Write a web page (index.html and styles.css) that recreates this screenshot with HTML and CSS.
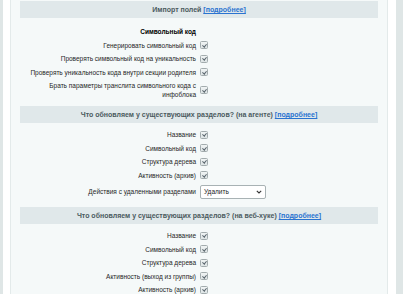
FILE: index.html
```html
<!DOCTYPE html>
<html lang="ru">
<head>
  <meta charset="UTF-8"/>
  <title>Импорт полей</title>
  <link rel="stylesheet" href="styles.css">
</head>
<body>
<div class="strip"></div>
<div class="gap-left"></div>

<main class="panel">
  <!-- Импорт полей -->
  <div class="heading">Импорт полей <a href="#">[подробнее]</a></div>
  <div class="row subheading"><label>Символьный код</label></div>
  <div class="row"><label>Генерировать символьный код</label><span class="cb"></span></div>
  <div class="row"><label>Проверять символьный код на уникальность</label><span class="cb"></span></div>
  <div class="row"><label>Проверять уникальность кода внутри секции родителя</label><span class="cb"></span></div>
  <div class="row tall"><label>Брать параметры транслита символьного кода с инфоблока</label><span class="cb"></span></div>

  <!-- На агенте -->
  <div class="heading">Что обновляем у существующих разделов? (на агенте) <a href="#">[подробнее]</a></div>
  <div class="row"><label>Название</label><span class="cb"></span></div>
  <div class="row"><label>Символьный код</label><span class="cb"></span></div>
  <div class="row"><label>Структура дерева</label><span class="cb"></span></div>
  <div class="row"><label>Активность (архив)</label><span class="cb"></span></div>
  <div class="row select-row">
    <label>Действия с удаленными разделами</label>
    <div class="select">
      <span>Удалить</span>
      <svg width="6" height="4" viewBox="0 0 6 4"><path d="M0.8 0.8 L3 3 L5.2 0.8" fill="none" stroke="#333" stroke-width="1.1"/></svg>
    </div>
  </div>

  <!-- На веб-хуке -->
  <div class="heading">Что обновляем у существующих разделов? (на веб-хуке) <a href="#">[подробнее]</a></div>
  <div class="row"><label>Название</label><span class="cb"></span></div>
  <div class="row"><label>Символьный код</label><span class="cb"></span></div>
  <div class="row"><label>Структура дерева</label><span class="cb"></span></div>
  <div class="row"><label>Активность (выход из группы)</label><span class="cb"></span></div>
  <div class="row"><label>Активность (архив)</label><span class="cb"></span></div>
</main>

<div class="gap-right"></div>
<div class="strip right"></div>
</body>
</html>
```

FILE: styles.css
```css
body {
  margin: 0;
  height: 294px;
  overflow: hidden;
  display: flex;
  background: #fff;
  font-family: "Liberation Sans", Arial, sans-serif;
  font-size: 6.5px;
  color: #262626;
}

.strip {
  width: 3px;
  background: #dfe6e6;
}

.strip.right {
  width: 7px;
}

.gap-left {
  width: 7px;
}

.gap-right {
  width: 8px;
}

.panel {
  width: 358px;
  padding: 1px 9px 0 9px;
  background: #f5f9f9;
  border-left: 1px solid #e3eaea;
  border-right: 1px solid #e3eaea;
}

.heading {
  height: 17px;
  line-height: 17px;
  margin: 5px 0;
  background: #e0e8ea;
  text-align: center;
  font-size: 7px;
  font-weight: bold;
  color: #4b5a5e;
}

.heading:first-child {
  margin-top: 0;
}

.heading a {
  color: #2a73d0;
  text-decoration: underline;
}

.row {
  display: grid;
  grid-template-columns: 1fr 1fr;
  align-items: center;
  padding: 2px 0;
  line-height: 9.5px;
}

.row label {
  text-align: right;
  padding-right: 3px;
}

.row.subheading {
  padding: 4px 0 2px 0;
  font-weight: bold;
  color: #000;
}

.row.tall {
  padding: 1.5px 0;
}

.row.select-row {
  padding: 3px 0;
}

.cb {
  width: 6px;
  height: 6px;
  margin-left: 1px;
  border: 1px solid #a3acae;
  border-radius: 1.5px;
  background: linear-gradient(#f0f4f4, #dde4e5);
  position: relative;
}

.cb::after {
  content: "";
  position: absolute;
  left: 1.5px;
  top: 0.5px;
  width: 1.6px;
  height: 3.2px;
  border-right: 1px solid #56626a;
  border-bottom: 1px solid #56626a;
  transform: rotate(40deg);
}

.select {
  width: 58px;
  height: 12px;
  margin-left: 1px;
  padding: 0 3px;
  border: 1px solid #a8b2b4;
  border-radius: 2px;
  background: #fff;
  display: flex;
  align-items: center;
  justify-content: space-between;
  color: #222;
}
```
